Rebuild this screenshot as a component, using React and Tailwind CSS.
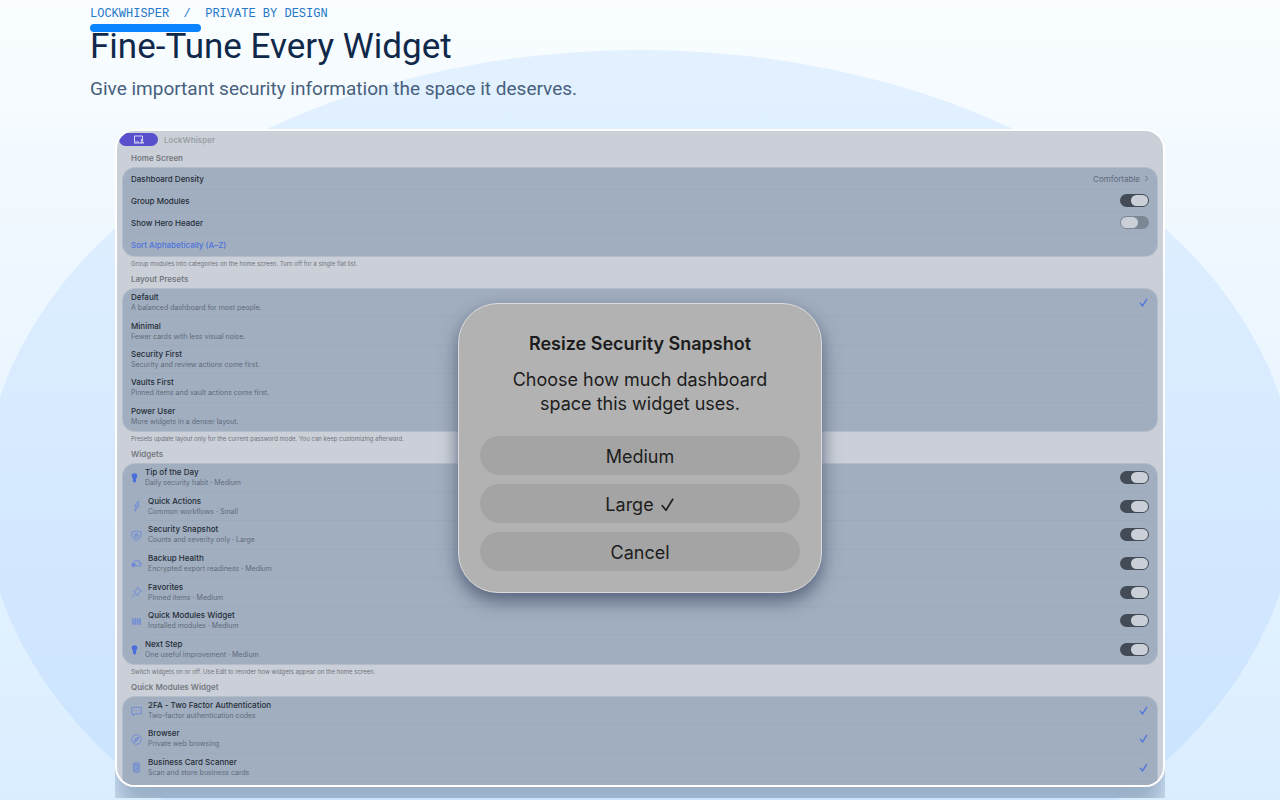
import { useState } from "react"

const presets = [
    { name: "Default", text: "A balanced dashboard for most people." },
    { name: "Minimal", text: "Fewer cards with less visual noise." },
    { name: "Security First", text: "Security and review actions come first." },
    { name: "Vaults First", text: "Pinned items and vault actions come first." },
    { name: "Power User", text: "More widgets in a denser layout." },
]

const widgets = [
    { name: "Tip of the Day", text: "Daily security habit · Medium", icon: "bulb" },
    { name: "Quick Actions", text: "Common workflows · Small", icon: "bolt" },
    { name: "Security Snapshot", text: "Counts and severity only · Large", icon: "shield" },
    { name: "Backup Health", text: "Encrypted export readiness · Medium", icon: "drive" },
    { name: "Favorites", text: "Pinned items · Medium", icon: "pin" },
    { name: "Quick Modules Widget", text: "Installed modules · Medium", icon: "grid" },
    { name: "Next Step", text: "One useful improvement · Medium", icon: "bulb" },
]

const modules = [
    { name: "2FA - Two Factor Authentication", text: "Two-factor authentication codes", icon: "message" },
    { name: "Browser", text: "Private web browsing", icon: "compass" },
    { name: "Business Card Scanner", text: "Scan and store business cards", icon: "scanner" },
]

const shapes = {
    bolt: <path d="M7 .8 4 5.500h2L4.200 11.200 8.800 4.800H6.800L8.800.8Z" />,
    shield: (
        <>
            <path d="M6 .8 11 2.500v3.200c0 2.600-2 4.500-5 5.700C3 10.200 1 8.300 1 5.700V2.500Z" />
            <path d="M4.200 5.500h3.600v2.500H4.200ZM4.900 5.500V4.500a1.100 1.100 0 0 1 2.200 0v1" />
        </>
    ),
    drive: (
        <>
            <path d="M3 5 4 3h5l2 3v2.500H5M8 5.500h3" />
            <circle cx="2.800" cy="7.500" r="2" fill="currentColor" />
        </>
    ),
    pin: <path d="M7.200.6 11.400 4.800 9.800 5.300 7.800 7.300l-.3 2.300L2.400 4.500l2.300-.3 2-2ZM5.100 6.900.6 11.400" />,
    grid: (
        <>
            <rect x="1" y="2.500" width="10" height="7" fill="currentColor" fillOpacity=".3" stroke="none" />
            <path d="M2 2.500v7M4.700 2.500v7M7.300 2.500v7M10 2.500v7" strokeWidth="1.600" strokeOpacity=".8" />
        </>
    ),
    message: (
        <>
            <path d="M.7 1.500h10.600v7H4.500L2.500 10.800V8.500H.7Z" />
            <path d="M3 5h1M5.500 5h1M8 5h1" />
        </>
    ),
    compass: (
        <>
            <circle cx="6" cy="6" r="5.200" />
            <path d="M8.500 3.500 7 7 3.500 8.500 5 5Z" fill="currentColor" fillOpacity=".5" />
        </>
    ),
    scanner: (
        <>
            <rect x="3" y="1" width="6" height="10" rx="1" fill="currentColor" fillOpacity=".4" />
            <path d="M2 3h2M2 6h2M2 9h2M5 4h3M5 7h3" />
        </>
    ),
}

const RowIcon = ({ name }) => {
    if (name === "bulb") {
        return (
            <svg viewBox="0 0 7 10" className="h-[10px] w-[7px] shrink-0 text-[#4a6fdc]" fill="currentColor">
                <path d="M3.500.3A2.800 2.600 0 0 0 .7 3c0 1.300 1 1.900 1.200 3.200v2.400l1.600 1.200 1.600-1.200V6.200C5.300 4.900 6.300 4.300 6.300 3A2.800 2.600 0 0 0 3.500.3Z" />
            </svg>
        )
    }
    return (
        <svg viewBox="0 0 12 12" className="-mr-px size-[11px] shrink-0 text-[#6c89da]" fill="none" stroke="currentColor" strokeWidth="1" strokeLinejoin="round">
            {shapes[name]}
        </svg>
    )
}

const Check = ({ className }) => (
    <svg viewBox="0 0 10 10" className={className} fill="none" stroke="currentColor" strokeLinecap="round" strokeLinejoin="round">
        <path d="M1.500 5.800 4 8.800 8.500 1.500" />
    </svg>
)

const Toggle = ({ id, defaultChecked }) => (
    <input
        id={id}
        type="checkbox"
        role="switch"
        defaultChecked={defaultChecked}
        className="flex h-[13px] w-[29px] shrink-0 appearance-none items-center rounded-full bg-[#7b8795] px-px before:h-[11px] before:w-[17px] before:rounded-full before:bg-[#cbd0d8] checked:justify-end checked:bg-[#424b56]"
    />
)

const Heading = ({ children }) => (
    <h2 className="px-[8px] text-[8px] leading-[12px] font-semibold text-[#74787f]">{children}</h2>
)

const Note = ({ children }) => (
    <p className="px-[8px] text-[6px] leading-[8px] text-[#6f737b]">{children}</p>
)

const Names = ({ name, text }) => (
    <span className="flex min-w-0 flex-col">
        <span className="text-[8px] leading-[11px] font-medium text-[#252d38]">{name}</span>
        <span className="text-[7px] leading-[10px] text-[#5f6b7b]">{text}</span>
    </span>
)

const group = "rounded-[12px] bg-[#a1aebf] px-[8px] shadow-[0_0_0_1px_#b3bdca]"
const simpleRow = "flex h-[22px] items-center justify-between border-b border-[#9ca9ba] text-[8px] font-medium text-[#252d38]"

const App = () => {
    const [preset, setPreset] = useState("Default")
    const [size, setSize] = useState("Large")

    return (
        <main className="relative h-screen overflow-hidden bg-linear-to-b from-[#f9fdff] to-[#daedff] font-['Inter',sans-serif]">
            <svg className="absolute inset-0 size-full" viewBox="0 0 1280 800" preserveAspectRatio="none" aria-hidden="true">
                <defs>
                    <linearGradient id="glow" x1="0" y1="0" x2="0" y2="1">
                        <stop offset="0" stopColor="#e3f1ff" />
                        <stop offset="1" stopColor="#c7e1ff" />
                    </linearGradient>
                </defs>
                <ellipse cx="640" cy="495" rx="656" ry="445" fill="url(#glow)" />
            </svg>

            <header className="relative px-[90px] pt-[6px] font-['Roboto',sans-serif]">
                <p className="font-['Liberation_Mono',monospace] text-[12px] leading-4 whitespace-pre text-[#2577c8]">{"LOCKWHISPER  /  PRIVATE BY DESIGN"}</p>
                <div className="mt-[2px] h-2 w-[111px] rounded-full bg-[#0a84ff]" />
                <h1 className="-mt-[6px] text-[35px] leading-[42px] text-[#10294a]">Fine-Tune Every Widget</h1>
                <p className="mt-[9px] text-[19px] leading-6 text-[#46607d]">Give important security information the space it deserves.</p>
            </header>

            <div className="relative mx-[115px] mt-[28px] overflow-hidden pb-[11px]">
                <section className="relative overflow-hidden rounded-[20px] border-2 border-white bg-[#cbd0d8] shadow-[0_26px_24px_#9ab0c8]">
                    <div className="flex items-center gap-[6px] pt-[2px] pl-[2px]">
                        <button type="button" aria-label="Sidebar" className="flex h-[13px] w-[39px] items-center justify-center rounded-full bg-[#5850cd] text-[#d6d4f5]">
                            <svg viewBox="0 0 12 9" className="h-[9px] w-[12px]" fill="none" stroke="currentColor" strokeWidth="1">
                                <path d="M6 7H1.500V1h8v3M1 8h6" />
                                <circle cx="9" cy="5" r="1.200" fill="currentColor" stroke="none" />
                                <path d="M7 8.600c0-3 4-3 4 0Z" fill="currentColor" stroke="none" />
                            </svg>
                        </button>
                        <span className="text-[8px] leading-[12px] font-semibold text-[#9b9fa6]">LockWhisper</span>
                    </div>

                    <div className="px-[6px] pt-[6px]">
                        <Heading>Home Screen</Heading>
                        <div className={`${group} mt-[4px]`}>
                            <div className={simpleRow}>
                                <label htmlFor="density">Dashboard Density</label>
                                <span className="flex items-center gap-1 font-normal text-[#5f6b7b]">
                                    <select id="density" className="field-sizing-content appearance-none bg-transparent text-[8px] leading-[12px]">
                                        <option>Comfortable</option>
                                        <option>Compact</option>
                                    </select>
                                    <svg viewBox="0 0 5 8" className="h-[7px] w-[5px]" fill="none" stroke="currentColor" strokeWidth="1">
                                        <path d="M1 1 4 4 1 7" />
                                    </svg>
                                </span>
                            </div>
                            <div className={simpleRow}>
                                <label htmlFor="group-modules">Group Modules</label>
                                <Toggle id="group-modules" defaultChecked />
                            </div>
                            <div className={simpleRow}>
                                <label htmlFor="hero">Show Hero Header</label>
                                <Toggle id="hero" />
                            </div>
                            <button type="button" className="flex h-[22px] w-full items-center text-[8px] font-medium text-[#4d73dd]">Sort Alphabetically (A–Z)</button>
                        </div>
                        <div className="mt-[4px]">
                            <Note>Group modules into categories on the home screen. Turn off for a single flat list.</Note>
                        </div>

                        <div className="mt-[5px]">
                            <Heading>Layout Presets</Heading>
                        </div>
                        <div className={`${group} mt-[4px] grid h-[142px] auto-rows-fr divide-y divide-[#9ca9ba]`}>
                            {presets.map((p) => (
                                <label key={p.name} className="flex items-center justify-between pr-[1px]">
                                    <input type="radio" name="preset" className="sr-only" checked={preset === p.name} onChange={() => setPreset(p.name)} />
                                    <Names name={p.name} text={p.text} />
                                    {preset === p.name && <Check className="size-[9px] stroke-[1.6] text-[#5478d9]" />}
                                </label>
                            ))}
                        </div>
                        <div className="mt-[4px]">
                            <Note>Presets update layout only for the current password mode. You can keep customizing afterward.</Note>
                        </div>

                        <div className="mt-[5px]">
                            <Heading>Widgets</Heading>
                        </div>
                        <div className={`${group} mt-[4px] grid h-[200px] auto-rows-fr`}>
                            {widgets.map((w) => (
                                <div key={w.name} className="group/row flex items-center gap-[7px]">
                                    <RowIcon name={w.icon} />
                                    <div className="flex h-full flex-1 items-center justify-between border-b border-[#9ca9ba] group-last/row:border-transparent">
                                        <label htmlFor={w.name}>
                                            <Names name={w.name} text={w.text} />
                                        </label>
                                        <Toggle id={w.name} defaultChecked />
                                    </div>
                                </div>
                            ))}
                        </div>
                        <div className="mt-[4px]">
                            <Note>Switch widgets on or off. Use Edit to reorder how widgets appear on the home screen.</Note>
                        </div>

                        <div className="mt-[5px]">
                            <Heading>Quick Modules Widget</Heading>
                        </div>
                        <div className={`${group} mt-[4px] grid h-[88px] auto-rows-fr rounded-b-none pb-[3px]`}>
                            {modules.map((m) => (
                                <label key={m.name} className="flex items-center gap-[7px]">
                                    <RowIcon name={m.icon} />
                                    <span className="flex h-full flex-1 items-center justify-between border-b border-[#9ca9ba] pr-[1px]">
                                        <Names name={m.name} text={m.text} />
                                        <input type="checkbox" defaultChecked className="peer sr-only" />
                                        <Check className="invisible size-[9px] stroke-[1.6] text-[#5478d9] peer-checked:visible" />
                                    </span>
                                </label>
                            ))}
                        </div>
                    </div>

                    <div className="absolute inset-0 flex items-start justify-center pt-[172px]">
                        <div role="dialog" aria-labelledby="resize-title" className="w-[364px] rounded-[40px] border border-[#dcdcdc] bg-[#b2b2b2] px-[21px] pt-[28px] pb-[21px] text-center text-[18px] leading-6 text-[#1c1c1c] shadow-[0_8px_18px_#56627b]">
                            <h2 id="resize-title" className="font-semibold">Resize Security Snapshot</h2>
                            <p className="mx-auto mt-3 w-[280px]">Choose how much dashboard space this widget uses.</p>
                            <div className="mt-[20px] flex flex-col gap-[9px]">
                                <button type="button" onClick={() => setSize("Medium")} className="flex h-[39px] items-center justify-center gap-[6px] rounded-full bg-[#a4a4a4] pt-[2px]">
                                    Medium
                                    {size === "Medium" && <Check className="size-[15px] stroke-[1.1]" />}
                                </button>
                                <button type="button" onClick={() => setSize("Large")} className="flex h-[39px] items-center justify-center gap-[6px] rounded-full bg-[#a4a4a4] pt-[2px]">
                                    Large
                                    {size === "Large" && <Check className="size-[15px] stroke-[1.1]" />}
                                </button>
                                <button type="button" className="h-[39px] rounded-full bg-[#a4a4a4] pt-[2px]">Cancel</button>
                            </div>
                        </div>
                    </div>
                </section>
            </div>
        </main>
    )
}
export default App
